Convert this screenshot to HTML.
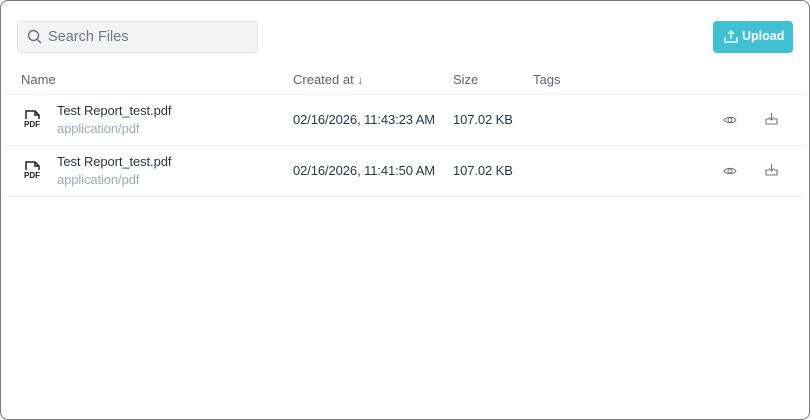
<!DOCTYPE html>
<html><head><style>
*{box-sizing:border-box;margin:0;padding:0}
body{width:810px;height:420px;background:#fff;font-family:"Liberation Sans",sans-serif;overflow:hidden}
.frame{position:absolute;left:0;top:0;width:810px;height:420px;border:1px solid #7a7a7a;border-radius:8px;background:#fff}
.search{position:absolute;left:17px;top:21px;width:241px;height:32px;background:#f4f4f5;border:1px solid #e2e4e8;border-radius:4px}
.search span{position:absolute;left:30px;top:7px;font-size:14.5px;color:#71757d}
.search svg{position:absolute;left:9px;top:7px}
.btn{position:absolute;left:713px;top:21px;width:80px;height:32px;background:#3fc1d3;border-radius:4px;color:#fff;font-size:12.5px;font-weight:bold}
.btn span{position:absolute;left:29px;top:8px}
.btn svg{position:absolute;left:11px;top:9px}
.th{position:absolute;top:72px;font-size:13px;color:#5d6470}
.line{position:absolute;left:5px;width:799px;height:1px;background:#eceef1}
.t{position:absolute;font-size:13px;color:#2f3540;letter-spacing:-0.1px}
.s{position:absolute;font-size:13px;color:#a3a9b3;letter-spacing:-0.1px}
.pdf{position:absolute;left:24px;font-size:8px;font-weight:bold;color:#222}
</style></head><body>
<div class="frame"></div>
<div class="search"><svg width="15" height="15" viewBox="0 0 15 15"><circle cx="6.5" cy="6.5" r="5" fill="none" stroke="#6b6f76" stroke-width="1.4"/><path d="M10.2 10.2L14 14" stroke="#6b6f76" stroke-width="1.4"/></svg><span>Search Files</span></div>
<div class="btn"><svg width="14" height="13" viewBox="0 0 14 13"><path d="M1 7v5h12V7" fill="none" stroke="#fff" stroke-width="1.3"/><path d="M7 9V1M4 4l3-3 3 3" fill="none" stroke="#fff" stroke-width="1.3"/></svg><span>Upload</span></div>
<div class="th" style="left:21px">Name</div>
<div class="th" style="left:293px">Created at <span style="font-size:12px">↓</span></div>
<div class="th" style="left:453px">Size</div>
<div class="th" style="left:533px">Tags</div>
<div class="line" style="top:94px"></div>
<div class="line" style="top:145px"></div>
<div class="line" style="top:196px"></div>

<svg style="position:absolute;left:25px;top:110px" width="16" height="9" viewBox="0 0 16 9"><path d="M1 9V1h9l4 4v4M10 1v4h4" fill="none" stroke="#222" stroke-width="1.5"/></svg>
<div class="pdf" style="top:120px">PDF</div>
<div class="t" style="left:57px;top:103px">Test Report_test.pdf</div>
<div class="s" style="left:57px;top:121px">application/pdf</div>
<div class="t" style="left:293px;top:112px">02/16/2026, 11:43:23 AM</div>
<div class="t" style="left:453px;top:112px">107.02 KB</div>

<svg style="position:absolute;left:25px;top:161px" width="16" height="9" viewBox="0 0 16 9"><path d="M1 9V1h9l4 4v4M10 1v4h4" fill="none" stroke="#222" stroke-width="1.5"/></svg>
<div class="pdf" style="top:171px">PDF</div>
<div class="t" style="left:57px;top:154px">Test Report_test.pdf</div>
<div class="s" style="left:57px;top:172px">application/pdf</div>
<div class="t" style="left:293px;top:163px">02/16/2026, 11:41:50 AM</div>
<div class="t" style="left:453px;top:163px">107.02 KB</div>

<svg style="position:absolute;left:723px;top:115px" width="14" height="10" viewBox="0 0 14 10"><path d="M1 5C3 1.5 11 1.5 13 5C11 8.5 3 8.5 1 5Z" fill="none" stroke="#777" stroke-width="1.1"/><circle cx="7" cy="5" r="2" fill="none" stroke="#777" stroke-width="1.1"/></svg>
<svg style="position:absolute;left:765px;top:112px" width="13" height="13" viewBox="0 0 13 13"><path d="M1 7v5h11V7H9M4 7H1" fill="none" stroke="#777" stroke-width="1.1"/><path d="M6.5 1v7M4 5.5l2.5 2.5 2.5-2.5" fill="none" stroke="#777" stroke-width="1.1"/></svg>
<svg style="position:absolute;left:723px;top:166px" width="14" height="10" viewBox="0 0 14 10"><path d="M1 5C3 1.5 11 1.5 13 5C11 8.5 3 8.5 1 5Z" fill="none" stroke="#777" stroke-width="1.1"/><circle cx="7" cy="5" r="2" fill="none" stroke="#777" stroke-width="1.1"/></svg>
<svg style="position:absolute;left:765px;top:163px" width="13" height="13" viewBox="0 0 13 13"><path d="M1 7v5h11V7H9M4 7H1" fill="none" stroke="#777" stroke-width="1.1"/><path d="M6.5 1v7M4 5.5l2.5 2.5 2.5-2.5" fill="none" stroke="#777" stroke-width="1.1"/></svg>
</body></html>
